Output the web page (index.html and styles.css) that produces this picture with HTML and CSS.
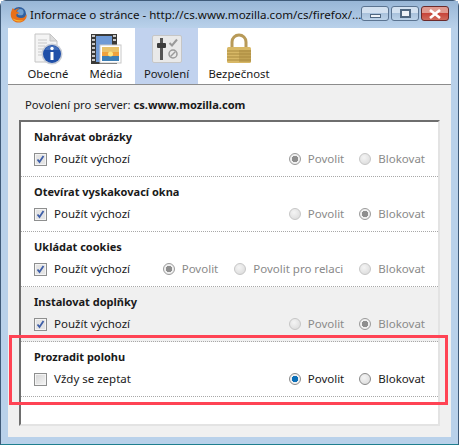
FILE: index.html
```html
<!DOCTYPE html>
<html lang="cs">
<head>
    <meta charset="UTF-8">
    <meta name="viewport" content="width=device-width, initial-scale=1.0">
    <title>Informace o stránce</title>
    <link rel="stylesheet" href="styles.css">
</head>
<body>
    <div class="window">
        <!-- Title bar -->
        <div class="titlebar">
            <svg class="fox" width="17" height="17" viewBox="0 0 18 18">
                <circle cx="9.500" cy="8.500" r="7.500" fill="#2f5f9f"/>
                <circle cx="11" cy="6.500" r="3.400" fill="#6f9fd0"/>
                <path d="M3 2C0 7 0 12 3.500 15.500c3.500 3 9 2.500 12-.5 2-2 2.500-4.500 2-6.500-1 3-3.300 4.500-6 4.200C9 12.500 6.500 11.500 6.700 9.500 6.900 8 8.500 7.500 10 8.200c-.5-1.700-2-2.200-3.200-2.200.5-1.500 1.700-2.500 3.200-3-2-.7-3.700.3-4.700 1.500C4.800 4 4 3 3 2z" fill="#e8701a"/>
                <path d="M2.500 13c2.500 3.500 8 4.500 11.500 2.200-3.500.5-8-.2-11.500-2.200z" fill="#f7b733"/>
            </svg>
            <span class="title-text">Informace o stránce - http://cs.www.mozilla.com/cs/firefox/...</span>
            <div class="win-buttons">
                <span class="win-btn"><i class="glyph-min"></i></span>
                <span class="win-btn"><i class="glyph-max"></i></span>
                <span class="win-btn win-close">
                    <svg width="14" height="10" viewBox="0 0 14 10"><path d="M2 1l10 8M12 1L2 9" stroke="#fff" stroke-width="2.600" fill="none"/></svg>
                </span>
            </div>
        </div>

        <div class="client">
            <!-- Tabs -->
            <div class="tabs">
                <div class="tab">
                    <svg width="32" height="32" viewBox="0 0 32 32">
                        <path d="M3 1h15l7 7v21H3z" fill="#f4f4f4" stroke="#c4c4c4"/>
                        <path d="M18 1v7h7z" fill="#dcdcdc" stroke="#c4c4c4"/>
                        <path d="M6 7h9M6 10h9M6 13h7M6 16h6M6 19h5M6 22h6" stroke="#c9c9c9"/>
                        <circle cx="20" cy="21" r="10.500" fill="#c7ccd6"/>
                        <circle cx="20" cy="21" r="9" fill="#1f4fa8"/>
                        <path d="M13 17a8 8 0 0 1 14 0z" fill="#5a84c8" opacity=".6"/>
                        <circle cx="20" cy="15.500" r="1.700" fill="#fff"/>
                        <rect x="18.500" y="19" width="3" height="8" fill="#fff"/>
                    </svg>
                    <span>Obecné</span>
                </div>
                <div class="tab">
                    <svg width="32" height="32" viewBox="0 0 32 32">
                        <rect x="1" y="1" width="26" height="30" fill="#3a3a38"/>
                        <rect x="6" y="3" width="16" height="26" fill="#6f9ad6"/>
                        <path d="M2 3h3M2 7h3M2 11h3M2 15h3M2 19h3M2 23h3M2 27h3M23 3h3M23 7h3M23 27h3" stroke="#c9c9c9" stroke-width="2"/>
                        <rect x="10" y="12" width="21" height="18" fill="#fff" stroke="#c8c8c8"/>
                        <rect x="12" y="14" width="17" height="14" fill="#f0a23c"/>
                        <rect x="12" y="14" width="17" height="5" fill="#e8c26a"/>
                        <rect x="12" y="23" width="17" height="5" fill="#3d7fb5"/>
                        <circle cx="20.500" cy="21" r="2.500" fill="#ffe680"/>
                    </svg>
                    <span>Média</span>
                </div>
                <div class="tab tab-active">
                    <svg width="32" height="32" viewBox="0 0 32 32">
                        <rect x="1.500" y="2.500" width="29" height="27" rx="1.500" fill="#e9e9e9" stroke="#c6c6c6"/>
                        <rect x="9" y="5" width="3" height="22" fill="#555"/>
                        <rect x="6" y="10" width="9" height="5" rx="1" fill="#3c3c3c"/>
                        <path d="M18.500 10l2.500 2.500 5-6" stroke="#9a9a9a" stroke-width="2" fill="none"/>
                        <circle cx="22" cy="21" r="4" fill="none" stroke="#9a9a9a" stroke-width="1.500"/>
                        <path d="M19.500 23.500l5-5" stroke="#9a9a9a" stroke-width="1.500"/>
                    </svg>
                    <span>Povolení</span>
                </div>
                <div class="tab">
                    <svg width="32" height="32" viewBox="0 0 32 32">
                        <path d="M9 15V9a7 7 0 0 1 14 0v6" fill="none" stroke="#b89a58" stroke-width="3"/>
                        <rect x="4" y="14" width="24" height="16" rx="1.500" fill="#d8b866"/>
                        <path d="M4 18h24M4 21h24M4 24h24M4 27h24" stroke="#a98a3e"/>
                        <rect x="16" y="17" width="12" height="12" fill="#a98a3e" opacity=".45"/>
                    </svg>
                    <span>Bezpečnost</span>
                </div>
            </div>

            <!-- Permissions -->
            <div class="content">
                <p class="server-line">Povolení pro server:<b>cs.www.mozilla.com</b></p>

                <div class="perm-list">
                    <div class="perm-row">
                        <h3>Nahrávat obrázky</h3>
                        <div class="perm-options">
                            <label class="check"><span class="box box-checked"></span>Použít výchozí</label>
                            <div class="radios disabled">
                                <label class="radio"><span class="dot dot-on"></span>Povolit</label>
                                <label class="radio"><span class="dot"></span>Blokovat</label>
                            </div>
                        </div>
                    </div>
                    <div class="perm-row">
                        <h3>Otevírat vyskakovací okna</h3>
                        <div class="perm-options">
                            <label class="check"><span class="box box-checked"></span>Použít výchozí</label>
                            <div class="radios disabled">
                                <label class="radio"><span class="dot"></span>Povolit</label>
                                <label class="radio"><span class="dot dot-on"></span>Blokovat</label>
                            </div>
                        </div>
                    </div>
                    <div class="perm-row">
                        <h3>Ukládat cookies</h3>
                        <div class="perm-options">
                            <label class="check"><span class="box box-checked"></span>Použít výchozí</label>
                            <div class="radios disabled radios-wide">
                                <label class="radio"><span class="dot dot-on"></span>Povolit</label>
                                <label class="radio"><span class="dot"></span>Povolit pro relaci</label>
                                <label class="radio"><span class="dot"></span>Blokovat</label>
                            </div>
                        </div>
                    </div>
                    <div class="perm-row perm-row-gray">
                        <h3>Instalovat doplňky</h3>
                        <div class="perm-options">
                            <label class="check"><span class="box box-checked"></span>Použít výchozí</label>
                            <div class="radios disabled">
                                <label class="radio"><span class="dot"></span>Povolit</label>
                                <label class="radio"><span class="dot dot-on"></span>Blokovat</label>
                            </div>
                        </div>
                    </div>
                    <div class="perm-row">
                        <h3>Prozradit polohu</h3>
                        <div class="perm-options">
                            <label class="check"><span class="box"></span>Vždy se zeptat</label>
                            <div class="radios">
                                <label class="radio"><span class="dot dot-blue"></span>Povolit</label>
                                <label class="radio"><span class="dot"></span>Blokovat</label>
                            </div>
                        </div>
                    </div>
                </div>
            </div>
        </div>

        <!-- Red annotation drawn over the screenshot -->
        <div class="highlight"></div>
    </div>
</body>
</html>
```

FILE: styles.css
```css
* {
    box-sizing: border-box;
    margin: 0;
    padding: 0;
    font-family: 'Noto Sans', 'Open Sans', sans-serif;
}

body {
    background-color: #fff;
    color: #1a1a1a;
    font-size: 11.5px;
    overflow: hidden;
}

.window {
    position: relative;
    width: 459px;
    height: 445px;
    padding: 0 7px 7px;
    background-color: #b9d1ea;
    border: 1px solid #3f5a78;
    border-bottom-color: #1f7f8f;
    border-radius: 6px 6px 0 0;
}

/* Title bar */
.titlebar {
    display: flex;
    align-items: center;
    height: 27px;
    margin: 0 -7px;
    padding: 0 9px;
    background: linear-gradient(#98b6d6, #b9d1ea);
}

.fox {
    flex: none;
    margin-right: 3px;
}

.title-text {
    flex: 1;
    font-size: 11.6px;
    white-space: nowrap;
    color: #111;
}

.win-buttons {
    display: flex;
    gap: 2px;
    margin-top: -2px;
}

.win-btn {
    display: flex;
    align-items: center;
    justify-content: center;
    width: 28px;
    height: 15px;
    border: 1px solid #5b7491;
    border-radius: 3px;
    background: linear-gradient(#d3e1f0 45%, #a9c2dc 50%, #bcd2e8);
}

.win-close {
    border-color: #6b2a2a;
    background: linear-gradient(#e09a90 45%, #c8453a 50%, #cf6a5c);
}

.glyph-min {
    width: 11px;
    height: 4px;
    margin-top: 5px;
    background-color: #eef3f8;
    border: 1px solid #4f6780;
}

.glyph-max {
    width: 11px;
    height: 9px;
    background-color: #eef3f8;
    border: 2px solid #4f6780;
}

/* Client area */
.client {
    height: 409px;
    background-color: #f0f0f0;
}

.tabs {
    display: grid;
    grid-template-columns: 58px 58px 63px 82px;
    height: 57px;
    padding-left: 11px;
    background-color: #fff;
    border-bottom: 1px solid #8c8c8c;
}

.tab {
    display: flex;
    flex-direction: column;
    align-items: center;
    padding-top: 5px;
    font-size: 11.3px;
    line-height: 17px;
}

.tab-active {
    background-color: #c1d2ee;
}

.content {
    padding: 0 11px;
}

.server-line {
    height: 35px;
    padding: 11px 6px 0;
    font-size: 11.3px;
    line-height: 17px;
}

.server-line b {
    margin-left: 3px;
    font-size: 11.1px;
}

/* Permission list */
.perm-list {
    height: 306px;
    width: 421px;
    background-color: #fff;
    border: 2px solid #e3e3e3;
    border-top-color: #6e6e6e;
    border-left-color: #6e6e6e;
}

.perm-row {
    height: 55px;
    padding: 6px 13px 0;
    border-bottom: 1px dotted #a8a8a8;
}

.perm-row-gray {
    background-color: #f0f0f0;
}

.perm-row h3 {
    font-size: 11px;
    font-weight: 700;
    line-height: 17px;
    margin-bottom: 6px;
}

.perm-options {
    display: flex;
    justify-content: space-between;
    align-items: center;
}

.check,
.radio {
    display: flex;
    align-items: center;
    line-height: 16px;
}

.radios {
    display: flex;
    gap: 15px;
}

.radios-wide {
    gap: 16px;
}

.radios.disabled {
    color: #8a8a8a;
}

/* Checkbox */
.box {
    width: 13px;
    height: 13px;
    margin-right: 7px;
    border: 1px solid #8e8f8f;
    outline: 1px solid #f4f4f4;
    outline-offset: -2px;
    background: linear-gradient(135deg, #d4d4d4, #f6f6f6);
}

.box-checked {
    background-color: #e4e4e4;
    background-image:
        url("data:image/svg+xml,%3Csvg xmlns='http://www.w3.org/2000/svg' width='11' height='11'%3E%3Cpath d='M2.500 5.500l2 2.500L8.500 2' fill='none' stroke='%233f5fa8' stroke-width='1.800'/%3E%3C/svg%3E");
    background-repeat: no-repeat;
    background-position: center;
}

/* Radio button */
.dot {
    width: 12px;
    height: 12px;
    margin-right: 7px;
    border: 1px solid #c6c6c6;
    border-radius: 50%;
    background: radial-gradient(circle at 40% 35%, #f4f4f4, #d8d8d8);
}

.radios:not(.disabled) .dot {
    border-color: #8a8a8a;
}

.dot-on {
    border-color: #9a9a9a;
    background: radial-gradient(circle, #8e8e8e 0 3px, #f0f0f0 3.500px);
}

.dot-blue {
    background: radial-gradient(circle, #0c6fb8 0 3px, #f0f0f0 3.500px);
}

/* Red box around the last row */
.highlight {
    position: absolute;
    left: 8px;
    top: 334px;
    width: 439px;
    height: 70px;
    border: 3px solid #ff4354;
}
```
